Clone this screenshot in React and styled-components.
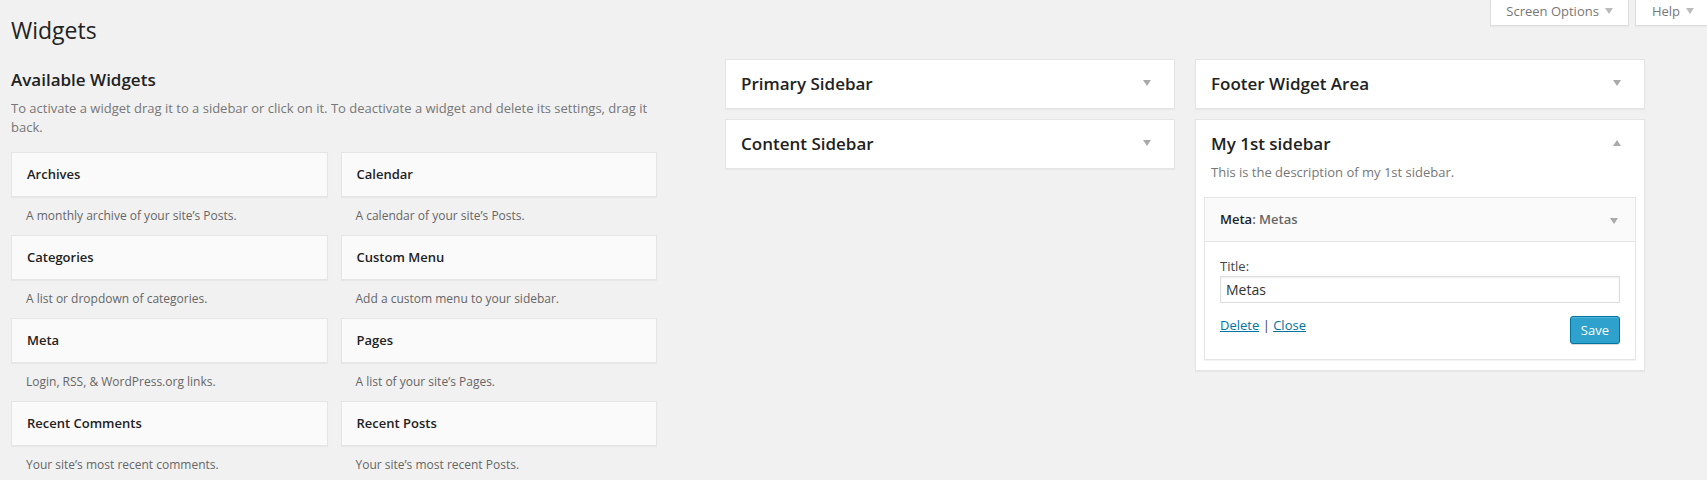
import React, { useState } from "react";
import styled, { createGlobalStyle } from "styled-components";

const GlobalStyle = createGlobalStyle`
  *, *::before, *::after { box-sizing: border-box; }
  body {
    margin: 0;
    background: #f1f1f1;
    color: #444;
    font: 400 13px/18px "Open Sans", sans-serif;
    overflow: hidden;
  }
  h1, h2, h3, h4, p { margin: 0; }
`;

const Page = styled.div`
  padding-left: 11px;
`;

const Header = styled.header`
  display: flex;
  justify-content: space-between;
  align-items: flex-start;
  height: 59px;
`;

const PageTitle = styled.h1`
  padding-top: 16px;
  font-size: 23px;
  line-height: 29px;
  font-weight: 400;
  color: #222;
`;

const ScreenTabs = styled.div`
  display: flex;
  gap: 6px;
`;

const ScreenTab = styled.button`
  display: flex;
  align-items: center;
  gap: 6px;
  height: 26px;
  padding: 0 15px 4px;
  border: 1px solid #ddd;
  border-top: 0;
  background: #fff;
  color: #777;
  font: inherit;
  box-shadow: 0 1px 1px rgba(0, 0, 0, 0.03);

  &:last-child {
    padding: 0 13px 4px 16px;
    border-right: 0;
  }
`;

const Columns = styled.main`
  display: grid;
  grid-template-columns: minmax(0, 646fr) minmax(0, 920fr);
  gap: 68px;
  align-items: start;
  padding-right: 62px;
`;

const Available = styled.section`
  padding-top: 9px;
`;

const SectionTitle = styled.h2`
  font-size: 17px;
  line-height: 24px;
  font-weight: 600;
  color: #222;
`;

const SectionText = styled.p`
  padding-top: 7px;
  line-height: 19px;
  color: #777;
`;

const WidgetGrid = styled.div`
  display: grid;
  grid-template-columns: 1fr 1fr;
  column-gap: 13px;
  padding-top: 15px;
`;

const WidgetItem = styled.article`
  height: 83px;
`;

const WidgetName = styled.h3`
  padding: 13px 15px;
  border: 1px solid #e5e5e5;
  background: #fafafa;
  box-shadow: 0 1px 1px rgba(0, 0, 0, 0.04);
  font-size: 13px;
  line-height: 17px;
  font-weight: 600;
  color: #222;
`;

const WidgetText = styled.p`
  padding: 10px 15px 0;
  font-size: 12px;
  color: #666;
`;

const Areas = styled.div`
  display: grid;
  grid-template-columns: 1fr 1fr;
  gap: 20px;
  align-items: start;
`;

const AreaColumn = styled.div`
  display: flex;
  flex-direction: column;
  gap: 10px;
`;

const AreaBox = styled.section`
  border: 1px solid #e5e5e5;
  background: #fff;
  box-shadow: 0 1px 1px rgba(0, 0, 0, 0.04);
`;

const AreaHead = styled.div`
  display: flex;
  justify-content: space-between;
  align-items: center;
  height: 48px;
  padding: 0 23px 0 15px;
`;

const Toggle = styled.button`
  display: flex;
  padding: 0 0 2px;
  border: 0;
  background: none;
`;

const AreaText = styled.p`
  margin-top: -5px;
  padding: 0 15px;
  color: #777;
`;

const WidgetBox = styled.div`
  margin: 16px 8px 10px;
  border: 1px solid #e5e5e5;
  box-shadow: 0 1px 1px rgba(0, 0, 0, 0.04);
`;

const WidgetHead = styled.div`
  display: flex;
  justify-content: space-between;
  align-items: center;
  height: 44px;
  padding: 0 17px 0 15px;
  border-bottom: 1px solid #e5e5e5;
  background: #fafafa;
`;

const WidgetTitle = styled.h3`
  padding-bottom: 2px;
  font-size: 13px;
  line-height: 18px;
  font-weight: 600;
  color: #222;

  span { color: #666; }
`;

const HeadToggle = styled(Toggle)`
  padding: 3px 0 0;
`;

const WidgetForm = styled.form`
  padding: 15px;
`;

const Field = styled.label`
  display: block;
  padding-bottom: 1px;
  color: #444;
`;

const TextInput = styled.input`
  display: block;
  width: 100%;
  height: 27px;
  padding: 0 5px;
  border: 1px solid #ddd;
  background: #fff;
  box-shadow: inset 0 1px 2px rgba(0, 0, 0, 0.07);
  color: #333;
  font: 400 14px/20px "Open Sans", sans-serif;
  outline: none;
`;

const Actions = styled.div`
  display: flex;
  justify-content: space-between;
  align-items: flex-start;
  padding-top: 13px;
`;

const Link = styled.a`
  color: #0074a2;
`;

const SaveButton = styled.button`
  height: 28px;
  padding: 0 10px;
  border: 1px solid #0074a2;
  border-radius: 3px;
  background: #2ea2cc;
  box-shadow: inset 0 1px 0 rgba(120, 200, 230, 0.5), 0 1px 0 rgba(0, 0, 0, 0.15);
  color: #fff;
  font: inherit;
`;

const Triangle = ({ up, color = "#aaa" }) => (
  <svg width="8" height="6" viewBox="0 0 8 6" fill={color} aria-hidden="true">
    <path d={up ? "M0 6L4 0L8 6Z" : "M0 0L8 0L4 6Z"} />
  </svg>
);

const WIDGETS = [
  ["Archives", "A monthly archive of your site’s Posts."],
  ["Calendar", "A calendar of your site’s Posts."],
  ["Categories", "A list or dropdown of categories."],
  ["Custom Menu", "Add a custom menu to your sidebar."],
  ["Meta", "Login, RSS, & WordPress.org links."],
  ["Pages", "A list of your site’s Pages."],
  ["Recent Comments", "Your site’s most recent comments."],
  ["Recent Posts", "Your site’s most recent Posts."],
];

function Area({ title, open, children }) {
  return (
    <AreaBox>
      <AreaHead>
        <SectionTitle>{title}</SectionTitle>
        <Toggle type="button" aria-label={`Toggle ${title}`} aria-expanded={!!open}>
          <Triangle up={open} />
        </Toggle>
      </AreaHead>
      {children}
    </AreaBox>
  );
}

export default function App() {
  const [title, setTitle] = useState("Metas");
  return (
    <Page>
      <GlobalStyle />
      <Header>
        <PageTitle>Widgets</PageTitle>
        <ScreenTabs>
          <ScreenTab type="button">Screen Options <Triangle color="#bbb" /></ScreenTab>
          <ScreenTab type="button">Help <Triangle color="#bbb" /></ScreenTab>
        </ScreenTabs>
      </Header>
      <Columns>
        <Available>
          <SectionTitle>Available Widgets</SectionTitle>
          <SectionText>
            To activate a widget drag it to a sidebar or click on it. To deactivate a widget and
            delete its settings, drag it back.
          </SectionText>
          <WidgetGrid>
            {WIDGETS.map(([name, text]) => (
              <WidgetItem key={name}>
                <WidgetName>{name}</WidgetName>
                <WidgetText>{text}</WidgetText>
              </WidgetItem>
            ))}
          </WidgetGrid>
        </Available>
        <Areas>
          <AreaColumn>
            <Area title="Primary Sidebar" />
            <Area title="Content Sidebar" />
          </AreaColumn>
          <AreaColumn>
            <Area title="Footer Widget Area" />
            <Area title="My 1st sidebar" open>
              <AreaText>This is the description of my 1st sidebar.</AreaText>
              <WidgetBox>
                <WidgetHead>
                  <WidgetTitle>Meta<span>: Metas</span></WidgetTitle>
                  <HeadToggle type="button" aria-label="Toggle Meta" aria-expanded="true">
                    <Triangle />
                  </HeadToggle>
                </WidgetHead>
                <WidgetForm onSubmit={(e) => e.preventDefault()}>
                  <Field htmlFor="widget-title">Title:</Field>
                  <TextInput
                    id="widget-title"
                    type="text"
                    value={title}
                    onChange={(e) => setTitle(e.target.value)}
                  />
                  <Actions>
                    <div>
                      <Link href="#delete">Delete</Link> | <Link href="#close">Close</Link>
                    </div>
                    <SaveButton type="submit">Save</SaveButton>
                  </Actions>
                </WidgetForm>
              </WidgetBox>
            </Area>
          </AreaColumn>
        </Areas>
      </Columns>
    </Page>
  );
}
